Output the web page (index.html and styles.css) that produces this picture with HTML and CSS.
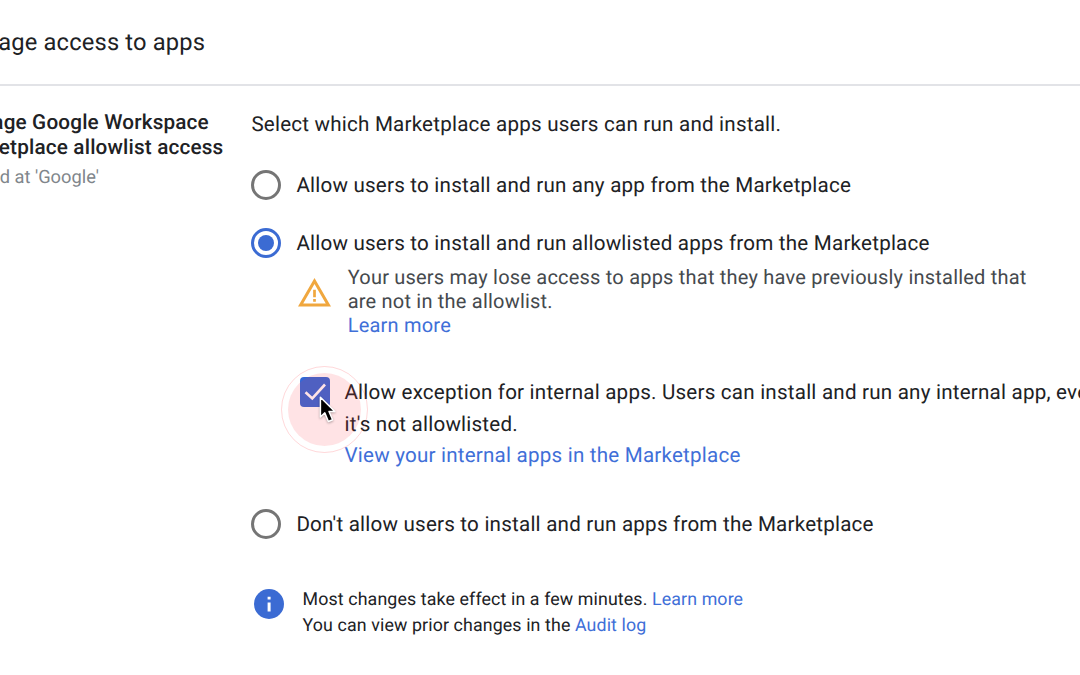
FILE: index.html
```
<!DOCTYPE html>
<html lang="en">

<head>
  <meta charset="UTF-8" />
  <meta name="viewport" content="width=device-width, initial-scale=1.0" />
  <title>Manage access to apps</title>
  <link rel="stylesheet" href="styles.css">
</head>

<body>
  <div class="page">
    <header class="header">
      <h1>Manage access to apps</h1>
    </header>
    <main class="main">
      <div class="side">
        <h2>Manage Google Workspace<br>Marketplace allowlist access</h2>
        <p>Applied at 'Google'</p>
      </div>
      <div class="content">
        <p class="intro">Select which Marketplace apps users can run and install.</p>

        <div class="option">
          <span class="radio"></span>
          <span class="label">Allow users to install and run any app from the Marketplace</span>
        </div>

        <div class="option option-allow">
          <span class="radio checked"></span>
          <span class="label">Allow users to install and run allowlisted apps from the Marketplace</span>
        </div>

        <div class="warning">
          <svg class="warning-icon" viewBox="1 2 22 19" width="33" height="28.5">
            <path fill="#f0a73e" d="M12 5.99 19.53 19H4.47L12 5.99M12 2 1 21h22L12 2z" />
            <path fill="#f0a73e" d="M11.1 9.8h1.8v5h-1.8zM11.1 16h1.8v1.8h-1.8z" />
          </svg>
          <div>
            Your users may lose access to apps that they have previously installed that<br>
            are not in the allowlist.<br>
            <a href="#">Learn more</a>
          </div>
        </div>

        <div class="exception">
          <div class="checkbox">
            <svg viewBox="0 0 30 30" width="30" height="30">
              <path fill="none" stroke="#fff" stroke-width="2.6" d="M5.5 15.2l6.8 6.2L25 7.5" />
            </svg>
            <span class="ripple"></span>
            <svg class="cursor" viewBox="0 0 18 28" width="18" height="28">
              <path fill="#000" stroke="#fff" stroke-width="1.5" stroke-linejoin="round"
                d="M1.4 1.2v19.8l4.4-4.1 3.6 8.6 4.2-1.8-3.6-8.2h5.8z" />
            </svg>
          </div>
          <div class="exception-text">
            Allow exception for internal apps. Users can install and run any internal app, even if<br>
            it's not allowlisted.<br>
            <a href="#">View your internal apps in the Marketplace</a>
          </div>
        </div>

        <div class="option">
          <span class="radio"></span>
          <span class="label">Don't allow users to install and run apps from the Marketplace</span>
        </div>

        <div class="info">
          <svg class="info-icon" viewBox="0 0 30 30" width="30" height="30">
            <circle cx="15" cy="15" r="15" fill="#3b6bd3" />
            <path fill="#fff" d="M13.6 7.8h3v2.8h-3zM13.6 13.4h3v9.2h-3z" />
          </svg>
          <div>
            Most changes take effect in a few minutes. <a href="#">Learn more</a><br>
            You can view prior changes in the <a href="#">Audit log</a>
          </div>
        </div>
      </div>
    </main>
  </div>
</body>

</html>
```

FILE: styles.css
```
* {
  box-sizing: border-box;
}

body {
  margin: 0;
  overflow: hidden;
  background: #fff;
  color: #202124;
  font-family: Roboto, "Liberation Sans", sans-serif;
  font-size: 20.6px;
  letter-spacing: .21px;
  text-rendering: geometricPrecision;
}

h1, h2, p {
  margin: 0;
}

a {
  color: #3f6fd8;
  text-decoration: none;
}

/* the panel is scrolled a little to the right */
.page {
  width: 1129px;
  height: 675px;
  margin-left: -49px;
  overflow: hidden;
  white-space: nowrap;
}

.header {
  height: 86px;
  padding-top: 26px;
  border-bottom: 2px solid #e2e3e7;
}

.header h1 {
  font-size: 23.7px;
  font-weight: 400;
  line-height: 32px;
  letter-spacing: .18px;
}

.main {
  display: flex;
}

.side {
  flex: none;
  width: 300.4px;
  padding-top: 25px;
}

.side h2 {
  font-size: 20.7px;
  font-weight: 500;
  line-height: 25px;
  letter-spacing: .18px;
}

.side p {
  margin: 5px 0 0 -2.4px;
  color: #80868b;
  font-size: 18.3px;
  line-height: 24px;
  letter-spacing: 0;
}

.intro {
  padding-top: 25px;
  line-height: 28px;
}

.option {
  display: flex;
  align-items: center;
  gap: 15px;
  height: 30px;
  margin-top: 31px;
}

.option-allow {
  margin-top: 28px;
}

.label {
  padding-top: 2px;
}

.radio {
  display: flex;
  width: 30px;
  height: 30px;
  border: 3px solid #757575;
  border-radius: 50%;
}

.radio.checked {
  border-color: #3b6bd3;
}

.radio.checked:after {
  content: "";
  width: 16px;
  height: 16px;
  margin: auto;
  border-radius: 50%;
  background: #3b6bd3;
}

.warning {
  display: flex;
  gap: 16.5px;
  margin: 7px 0 0 46.8px;
  color: #45494d;
  font-size: 20px;
  line-height: 24px;
  letter-spacing: .21px;
}

.warning-icon {
  margin-top: 13px;
}

.exception {
  display: flex;
  gap: 14.7px;
  margin: 40px 0 0 48.4px;
}

.checkbox {
  position: relative;
  width: 30px;
  height: 30px;
  border-radius: 4px;
  background: #3367d6;
}

/* click highlight over the checkbox */
.ripple {
  position: absolute;
  top: -4px;
  left: -12px;
  width: 73px;
  height: 73px;
  border-radius: 50%;
  background: rgba(255, 60, 70, .14);
}

.ripple:after {
  content: "";
  position: absolute;
  inset: -7px;
  border: 1px solid rgba(255, 60, 70, .2);
  border-radius: 50%;
}

.cursor {
  position: absolute;
  top: 19px;
  left: 19px;
  filter: drop-shadow(0 1px 1px rgba(0, 0, 0, .3));
}

.exception-text {
  padding-top: 1px;
  line-height: 31.7px;
}

.exception + .option {
  margin-top: 36px;
}

.info {
  display: flex;
  gap: 18.6px;
  margin: 48px 0 0 2.6px;
  font-size: 17.8px;
  line-height: 25.5px;
  letter-spacing: .12px;
}

.info-icon {
  margin-top: 2px;
}
```
